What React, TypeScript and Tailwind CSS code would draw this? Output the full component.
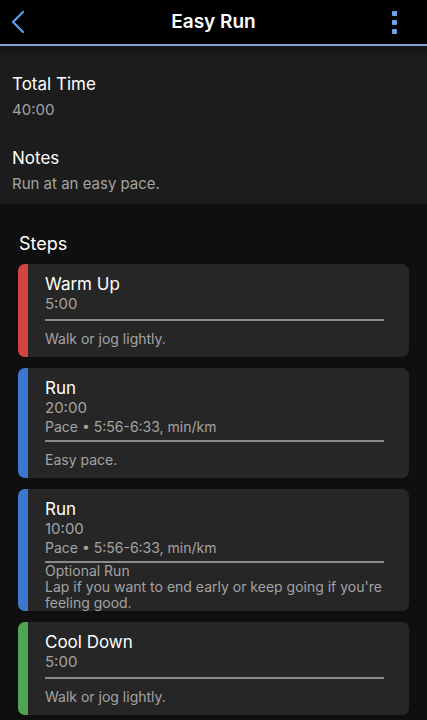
import React from "react";

type Step = {
  name: string;
  time: string;
  pace?: string;
  notes: string[];
  color: string;
};

const steps: Step[] = [
  { name: "Warm Up", time: "5:00", notes: ["Walk or jog lightly."], color: "bg-[#d2453f]" },
  { name: "Run", time: "20:00", pace: "Pace • 5:56-6:33, min/km", notes: ["Easy pace."], color: "bg-[#3b76cf]" },
  {
    name: "Run",
    time: "10:00",
    pace: "Pace • 5:56-6:33, min/km",
    notes: ["Optional Run", "Lap if you want to end early or keep going if you're feeling good."],
    color: "bg-[#3b76cf]",
  },
  { name: "Cool Down", time: "5:00", notes: ["Walk or jog lightly."], color: "bg-[#4fa552]" },
];

function StepCard({ step }: { step: Step }) {
  return (
    <div className="flex rounded-[7px] overflow-hidden bg-[#262626]">
      <div className={`w-[10px] shrink-0 ${step.color}`} />
      <div className="flex-1 pl-[17px] pr-[25px] pt-[10px]">
        <div className="text-[17px] leading-[20px] text-white">{step.name}</div>
        <div className="text-[15px] leading-[20px] text-[#a3a3a3]">{step.time}</div>
        {step.pace && <div className="text-[14px] leading-[17px] text-[#a3a3a3]">{step.pace}</div>}
        <div className="h-[2px] bg-[#8a8a8a] mt-[5px]" />
        <div className="min-h-[36px] flex flex-col justify-center text-[14px] leading-[16px] text-[#a3a3a3]">
          {step.notes.map((n, i) => (
            <div key={i}>{n}</div>
          ))}
        </div>
      </div>
    </div>
  );
}

export default function App() {
  return (
    <main
      className="w-[427px] h-[720px] overflow-hidden bg-[#0f0f0f] text-white"
      style={{ fontFamily: "Inter, 'Noto Sans', sans-serif" }}
    >
      {/* Header */}
      <div className="h-[44px] bg-black flex items-center justify-between px-[10px] relative">
        <svg width="16" height="24" viewBox="0 0 16 24" fill="none">
          <path d="M13 2 L3 12 L13 22" stroke="#5b9ae6" strokeWidth="2.4" strokeLinecap="round" strokeLinejoin="round" />
        </svg>
        <h1 className="absolute left-0 right-0 text-center text-[19px] font-semibold pointer-events-none">Easy Run</h1>
        <div className="flex flex-col gap-[4px] pr-[20px]">
          <div className="w-[5px] h-[5px] rounded-[1px] bg-[#6ea3ea]" />
          <div className="w-[5px] h-[5px] rounded-[1px] bg-[#6ea3ea]" />
          <div className="w-[5px] h-[5px] rounded-[1px] bg-[#6ea3ea]" />
        </div>
      </div>
      <div className="h-[2px] bg-[#7fa3d6]" />
      <div className="h-[7px] bg-[#161616]" />

      {/* Summary */}
      <div className="bg-[#1c1c1c] px-[12px] pt-[20px] pb-[10px]">
        <div className="text-[17px] leading-[22px]">Total Time</div>
        <div className="text-[15px] leading-[20px] text-[#a3a3a3] mt-[5px]">40:00</div>
        <div className="text-[17px] leading-[22px] mt-[27px]">Notes</div>
        <div className="text-[15px] leading-[20px] text-[#a3a3a3] mt-[5px]">Run at an easy pace.</div>
      </div>

      {/* Steps */}
      <div className="px-[18px] pt-[29px]">
        <h2 className="text-[18px] leading-[22px] pl-px mb-[9px]">Steps</h2>
        <div className="flex flex-col gap-[11px]">
          {steps.map((s, i) => (
            <StepCard key={i} step={s} />
          ))}
        </div>
      </div>
    </main>
  );
}
